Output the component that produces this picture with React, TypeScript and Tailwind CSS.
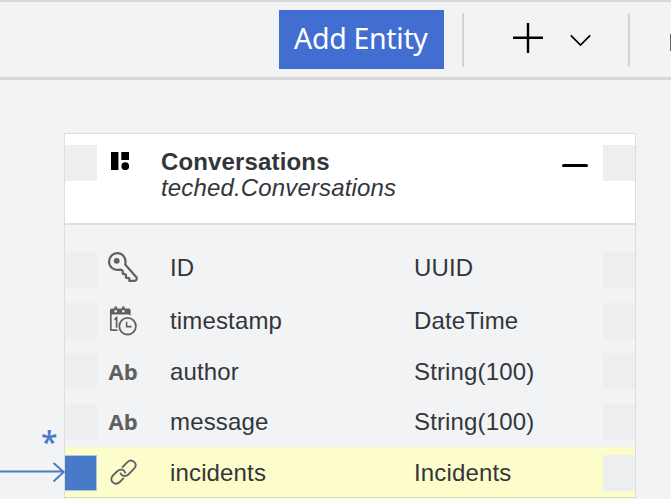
import React from "react";

type Kind = "key" | "date" | "text" | "link";

const rows: { name: string; type: string; kind: Kind; box: string; label: string; active?: boolean }[] = [
  { name: "ID", type: "UUID", kind: "key", box: "h-[51px] pt-[7px]", label: "-mt-[2px]" },
  { name: "timestamp", type: "DateTime", kind: "date", box: "h-[50px] pt-[7px]", label: "" },
  { name: "author", type: "String(100)", kind: "text", box: "h-[51px] pt-[7px]", label: "mt-px" },
  { name: "message", type: "String(100)", kind: "text", box: "h-[50px] pt-[7px]", label: "" },
  { name: "incidents", type: "Incidents", kind: "link", box: "h-[50px] pt-[8px]", label: "", active: true },
];

function KeyIcon() {
  return (
    <svg width="32" height="32" viewBox="0 0 32 32" fill="none" stroke="#606060" strokeWidth="2.2" strokeLinejoin="round">
      <path d="M18.2 12.6 29.6 25.4Q30.2 28.8 27.4 28.8H22.3V26.4L18.9 25.6V22.6L15.7 21.6V18.8L13.2 17.6C7.4 19 2.2 15.4 2 10 2 5 5.6 1.2 10.3 1.2 16.2 1.2 19.6 6.6 18.2 12.6Z" />
      <circle cx="9.7" cy="8.8" r="2.9" fill="#606060" stroke="none" />
    </svg>
  );
}

function DateIcon() {
  return (
    <svg width="32" height="32" viewBox="0 0 32 32" fill="none" stroke="#606060" strokeWidth="1.7">
      <path d="M10.5 25.2H4.6Q3.8 25.2 3.8 24.4V6" />
      <path d="M3 9.4V5.2Q3 3.6 4.6 3.6H22Q23.6 3.6 23.6 5.2V10.4L21.6 9.4Z" fill="#606060" stroke="none" />
      <path d="M8.7 1.6v3M16.3 1.6v3" strokeWidth="2.6" />
      <circle cx="8.7" cy="6.2" r="1.2" fill="#f2f3f5" stroke="none" />
      <circle cx="16.3" cy="6.2" r="1.2" fill="#f2f3f5" stroke="none" />
      <path d="M7.4 14.6 9.6 12.6v10.2" strokeWidth="1.7" />
      <circle cx="20.6" cy="21.2" r="8.3" strokeWidth="1.8" />
      <path d="M19.6 16.8v4.8h5" strokeWidth="1.6" />
    </svg>
  );
}

function LinkIcon() {
  return (
    <svg width="32" height="32" viewBox="0 0 32 32" fill="none" stroke="#606060" strokeWidth="1.8" strokeLinecap="round">
      <path d="M15.6 10 20.2 5.3C25 .9 31.3 6.6 27.3 11.4L21.4 17.5C18.8 20 14.3 19.2 13.5 16.3" />
      <path d="M18.1 15.8C17.3 12.5 13.3 11.5 10.5 14L5.8 18.7C1.4 23.6 8 29.4 12.8 25L16.4 21.4" />
    </svg>
  );
}

function RowIcon({ kind }: { kind: Kind }) {
  if (kind === "key") return <KeyIcon />;
  if (kind === "date") return <DateIcon />;
  if (kind === "link") return <LinkIcon />;
  return (
    <span className="pb-[2px] pl-[1.5px] font-['Open_Sans','Noto_Sans',sans-serif] text-[22px] leading-[30px] font-bold text-[#606060]">Ab</span>
  );
}

function Toolbar() {
  return (
    <header className="flex h-20 items-start border-t-2 border-b-[3px] border-[#d7d8d9] pt-2 pl-[279px]">
      <button className="h-[59px] w-[165px] shrink-0 bg-[#436ed1] pl-[15px] text-left font-['Noto_Sans','Open_Sans',sans-serif] text-[28.5px] leading-[57px] tracking-[-0.3px] whitespace-nowrap text-white">
        <span className="block h-full">Add Entity</span>
      </button>
      <div className="mt-[3px] ml-[18px] h-[54px] w-[2px] shrink-0 bg-[#d3d4d6]" />
      <svg className="mt-[13px] ml-[49px] shrink-0" width="30" height="30" fill="none" stroke="#000" strokeWidth="2.4">
        <path d="M0 14.7h30M15 0v30" />
      </svg>
      <svg className="mt-[24px] ml-[27px] shrink-0" width="22" height="13" fill="none" stroke="#000" strokeWidth="1.7">
        <path d="m.8 1.3 9.7 9.7 9.7-9.7" />
      </svg>
      <div className="mt-[3px] ml-[36px] h-[54px] w-[2px] shrink-0 bg-[#d3d4d6]" />
      <div className="mt-[24px] ml-[40px] h-[17px] w-px shrink-0 bg-[#686868]" />
    </header>
  );
}

function Entity() {
  return (
    <section className="ml-16 flex h-[366px] w-[572px] flex-col border border-b-0 border-[#dcdddf]">
      <div className="flex h-[91px] shrink-0 items-start justify-between border-b-2 border-[#dfdfe0] bg-white pt-[11px]">
        <div className="h-[36px] w-[32px] bg-[#edeef0]" />
        <svg className="mt-[7px] ml-[14px]" width="18" height="18">
          <path d="M0 0h7.4v18H0ZM10.3 0H18v8h-7.7Z" />
          <circle cx="14.3" cy="14.2" r="3.9" />
        </svg>
        <div className="ml-8 flex-1 text-[24px] leading-[26px] tracking-[0.15px]">
          <h1 className="mt-[4px] font-bold">Conversations</h1>
          <p className="italic">teched.Conversations</p>
        </div>
        <div className="mt-[19px] mr-[15px] h-[3px] w-[26px] rounded-sm bg-black" />
        <div className="h-[36px] w-[32px] bg-[#edeef0]" />
      </div>
      <div className="pt-[20px]">
        {rows.map((row) => (
          <div key={row.name} className={`flex items-start ${row.box} ${row.active ? "bg-[#fdfdcc]" : ""}`}>
            <div className={`h-[36px] w-[32px] shrink-0 ${row.active ? "border-y border-r border-[#acc7e4] bg-[#487ac9]" : "bg-[#edeef0]"}`} />
            <div className={`flex h-[36px] flex-1 items-center ${row.label}`}>
              <div className="ml-[10px] flex h-8 w-[63px] items-center"><RowIcon kind={row.kind} /></div>
              <span className="w-[244px]">{row.name}</span>
              <span>{row.type}</span>
            </div>
            <div className="h-[36px] w-[32px] shrink-0 bg-[#edeef0]" />
          </div>
        ))}
        <div className="h-px bg-[#d8d9cc]" />
        <div className="h-px bg-[#fdfdcc]" />
      </div>
    </section>
  );
}

export default function App() {
  return (
    <main className="relative h-[499px] w-[671px] overflow-hidden bg-[#f2f3f5] font-['Liberation_Sans',Arial,sans-serif] text-[24px] leading-[28px] tracking-[0.15px] text-[#32363a]">
      <Toolbar />
      <div className="pt-[53px]"><Entity /></div>
      <svg className="absolute top-[460px] left-0" width="66" height="24" fill="none" stroke="#487ac9" strokeWidth="1.9">
        <path d="M0 11.5h64M53.5 3l10.2 9-10.2 9.5" />
      </svg>
      <span className="absolute top-[424px] left-[41px] font-['Open_Sans',sans-serif] text-[30px] leading-[36px] font-semibold text-[#487ac9]">*</span>
    </main>
  );
}
